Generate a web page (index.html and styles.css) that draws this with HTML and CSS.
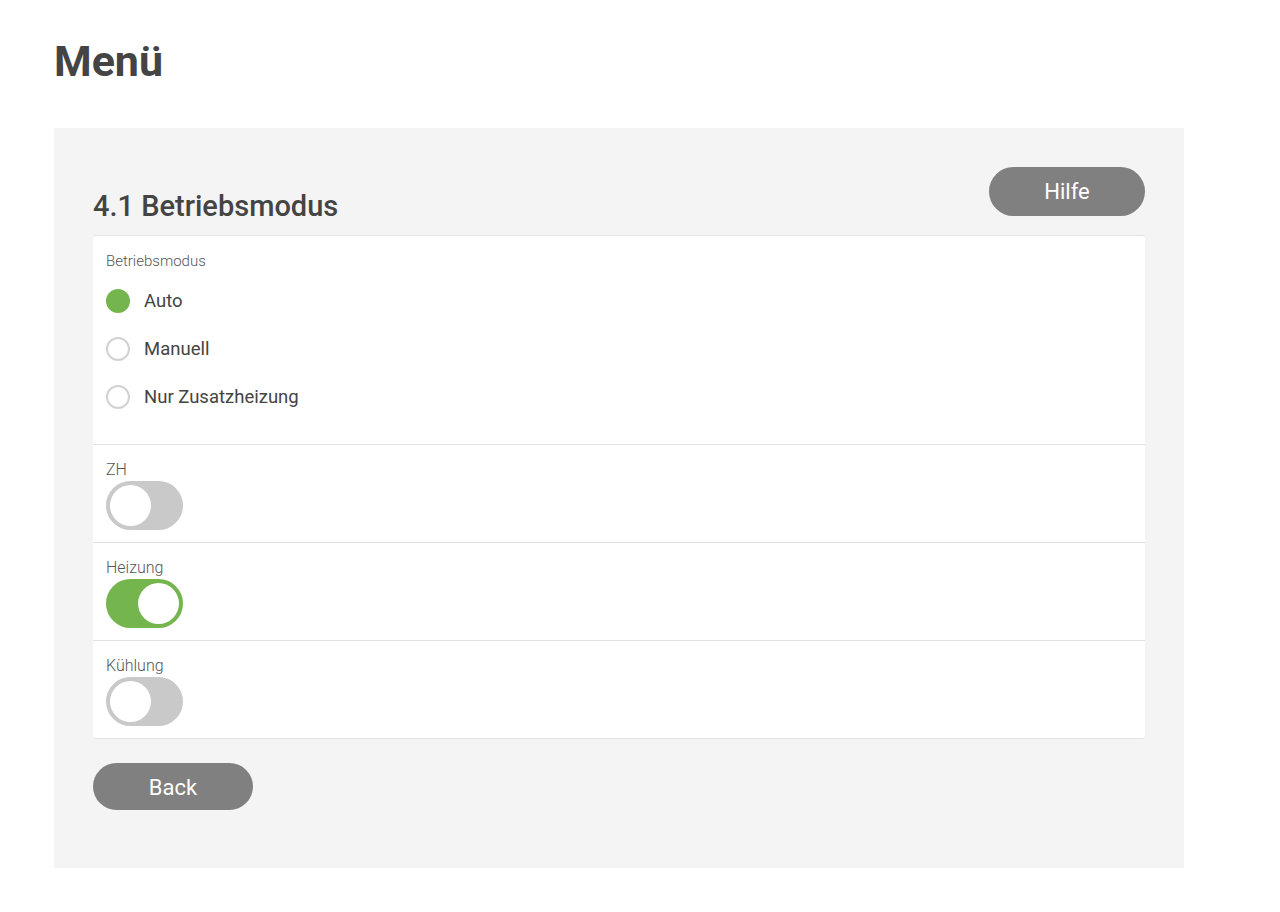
FILE: index.html
```html
<!DOCTYPE html>
<html>
  <head>
    <title>Menü</title>
    <link rel="stylesheet" href="styles.css">
  </head>
  <body>
    <h1 class="page-title">Menü</h1>
    <div class="panel">
      <div class="panel-head">
        <h2 class="panel-title">4.1 Betriebsmodus</h2>
        <button class="pill-btn help-btn" type="button">Hilfe</button>
      </div>
      <div class="card">
        <div class="section radio-section">
          <div class="field-label">Betriebsmodus</div>
          <label class="radio">
            <span class="radio-dot checked"></span>
            <span>Auto</span>
          </label>
          <label class="radio">
            <span class="radio-dot"></span>
            <span>Manuell</span>
          </label>
          <label class="radio">
            <span class="radio-dot"></span>
            <span>Nur Zusatzheizung</span>
          </label>
        </div>
        <div class="section">
          <div class="field-label">ZH</div>
          <span class="toggle"><span class="knob"></span></span>
        </div>
        <div class="section">
          <div class="field-label">Heizung</div>
          <span class="toggle on"><span class="knob"></span></span>
        </div>
        <div class="section">
          <div class="field-label">Kühlung</div>
          <span class="toggle"><span class="knob"></span></span>
        </div>
      </div>
      <button class="pill-btn back-btn" type="button">Back</button>
    </div>
  </body>
</html>
```

FILE: styles.css
```css
body {
  margin: 0;
  padding: 30px 54px 0;
  font-family: Roboto, "Liberation Sans", sans-serif;
  color: #444;
  background: #fff;
}

.page-title {
  margin: 0 0 36px;
  font-size: 43px;
  font-weight: 700;
  line-height: 62px;
  color: #444;
}

.panel {
  width: 1130px;
  box-sizing: border-box;
  background: #f4f4f4;
  padding: 39px 39px 58px;
}

.panel-head {
  display: flex;
  justify-content: space-between;
  align-items: flex-end;
  margin-bottom: 19px;
}

.panel-title {
  margin: 0;
  font-size: 29px;
  font-weight: 500;
  line-height: 32px;
  color: #444;
  position: relative;
  top: 6px;
}

.pill-btn {
  border: none;
  background: #808080;
  color: #fff;
  font-family: Roboto, "Liberation Sans", sans-serif;
  font-size: 22px;
  border-radius: 25px;
  cursor: pointer;
}

.help-btn {
  width: 156px;
  height: 49px;
  padding-bottom: 1px;
}

.back-btn {
  width: 160px;
  height: 47px;
  margin-top: 24px;
  padding-top: 2px;
}

.card {
  background: #fff;
  border-top: 1px solid #e2e2e2;
  border-bottom: 1px solid #e2e2e2;
  border-radius: 3px;
}

.section {
  padding: 13px 13px 12px;
  height: 98px;
  box-sizing: border-box;
  border-top: 1px solid #e2e2e2;
}

.section:first-child {
  border-top: none;
}

.radio-section {
  height: 208px;
  padding-top: 14px;
}

.field-label {
  font-weight: 300;
  color: #555;
  line-height: 23px;
  font-size: 16px;
}

.radio-section .field-label {
  font-size: 15px;
  line-height: 22px;
  margin-bottom: 5px;
}

.radio {
  display: flex;
  align-items: center;
  gap: 14px;
  height: 48px;
  font-size: 18.5px;
  color: #444;
}

.radio-dot {
  width: 20px;
  height: 20px;
  border: 2px solid #d2d2d2;
  border-radius: 50%;
}

.radio-dot.checked {
  border-color: #74b54d;
  background: #74b54d;
}

.toggle {
  display: flex;
  align-items: center;
  width: 77px;
  height: 49px;
  box-sizing: border-box;
  padding: 4px;
  border-radius: 25px;
  background: #c9c9c9;
}

.toggle.on {
  background: #74b54d;
  justify-content: flex-end;
}

.knob {
  width: 41px;
  height: 41px;
  border-radius: 50%;
  background: #fff;
}
```
